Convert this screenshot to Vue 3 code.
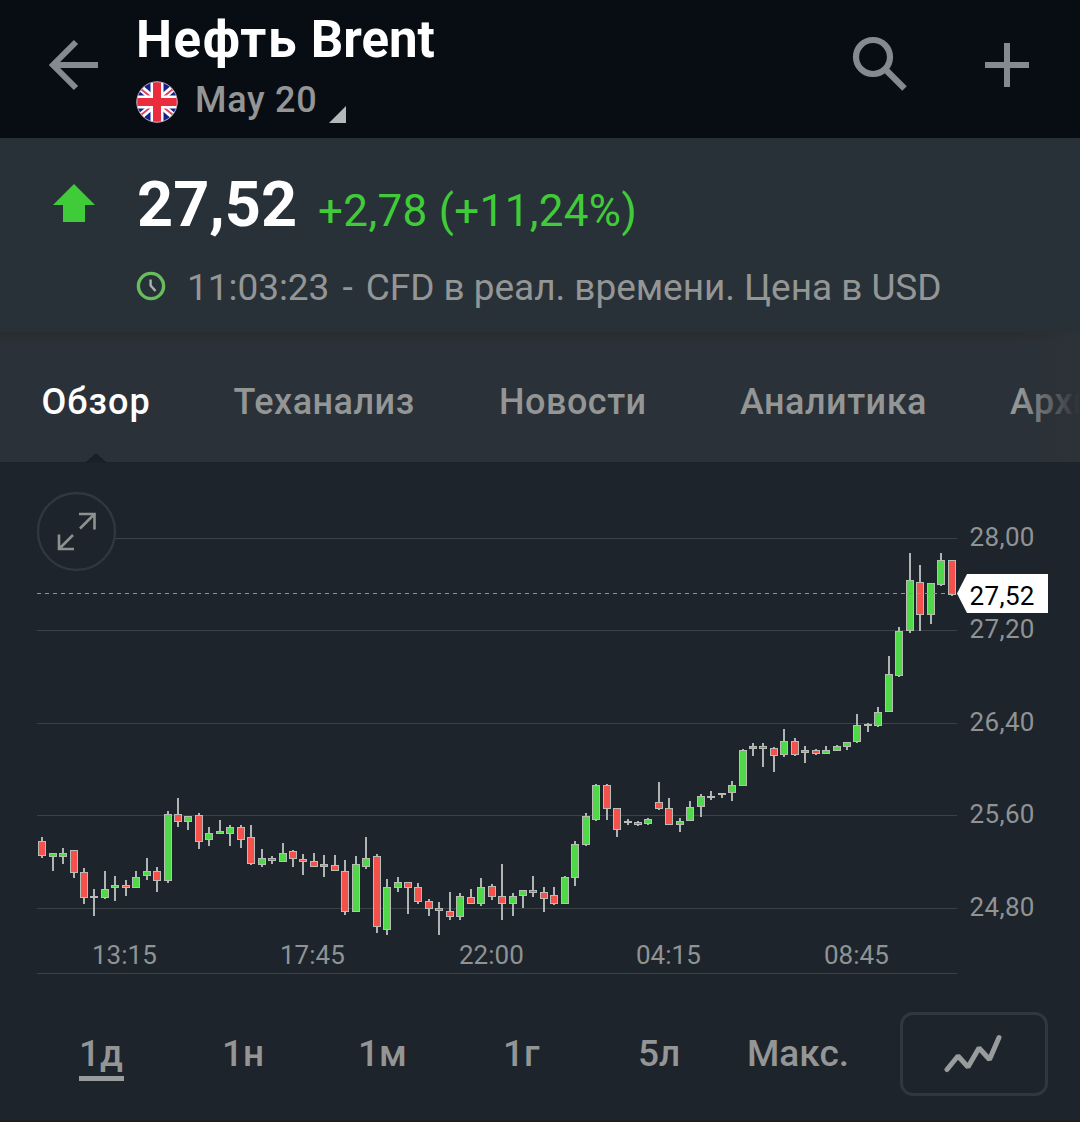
<script setup>
const tabs = ['Обзор', 'Теханализ', 'Новости', 'Аналитика', 'Архив']
const ranges = ['1д', '1н', '1м', '1г', '5л', 'Макс.']

const gridLines = [
  { y: 538.5, label: '28,00' },
  { y: 630.5, label: '27,20' },
  { y: 723.5, label: '26,40' },
  { y: 815.5, label: '25,60' },
  { y: 908.5, label: '24,80' },
]
const times = [
  { x: 92, label: '13:15' },
  { x: 280, label: '17:45' },
  { x: 459, label: '22:00' },
  { x: 636, label: '04:15' },
  { x: 824, label: '08:45' },
]

// high, body top, body bottom, low, direction (g: up, r: down, n: flat)
const raw = [
  [837, 841, 856, 858, 'r'], [853, 853, 857, 871, 'g'], [848, 853, 857, 864, 'g'], [850, 850, 873, 878, 'r'],
  [868, 872, 898, 904, 'r'], [889, 896, 898, 916, 'n'], [871, 889, 898, 899, 'g'], [876, 885, 888, 901, 'g'],
  [880, 885, 888, 896, 'r'], [871, 877, 888, 888, 'g'], [858, 871, 876, 880, 'g'], [867, 871, 881, 892, 'r'],
  [811, 814, 881, 883, 'g'], [798, 814, 822, 827, 'r'], [816, 816, 822, 830, 'g'], [813, 815, 842, 849, 'r'],
  [827, 833, 840, 846, 'g'], [820, 831, 834, 834, 'g'], [825, 827, 834, 846, 'g'], [825, 827, 840, 848, 'r'],
  [825, 837, 864, 865, 'r'], [849, 858, 865, 867, 'g'], [856, 858, 861, 864, 'r'], [843, 853, 862, 862, 'g'],
  [850, 851, 859, 867, 'r'], [854, 859, 862, 875, 'r'], [853, 861, 867, 867, 'r'], [855, 864, 867, 877, 'g'],
  [855, 865, 871, 871, 'r'], [860, 871, 912, 915, 'r'], [856, 864, 912, 912, 'g'], [837, 858, 867, 869, 'g'],
  [854, 856, 927, 933, 'r'], [879, 887, 930, 935, 'g'], [877, 882, 888, 892, 'g'], [882, 882, 888, 914, 'r'],
  [883, 887, 902, 904, 'r'], [899, 901, 909, 916, 'r'], [902, 908, 911, 935, 'r'], [892, 911, 917, 920, 'r'],
  [893, 896, 917, 920, 'g'], [889, 897, 904, 904, 'r'], [878, 887, 904, 906, 'g'], [884, 886, 897, 900, 'r'],
  [864, 896, 904, 920, 'r'], [893, 896, 904, 916, 'g'], [890, 890, 896, 908, 'g'], [876, 890, 893, 897, 'r'],
  [887, 892, 899, 912, 'r'], [887, 895, 904, 905, 'r'], [876, 877, 904, 904, 'g'], [841, 844, 878, 886, 'g'],
  [813, 816, 845, 846, 'g'], [784, 785, 820, 821, 'g'], [784, 785, 809, 820, 'r'], [808, 808, 830, 837, 'r'],
  [819, 821, 823, 825, 'n'], [821, 822, 825, 826, 'r'], [818, 819, 824, 825, 'g'], [782, 802, 809, 810, 'r'],
  [798, 808, 825, 825, 'r'], [818, 821, 825, 832, 'g'], [801, 807, 821, 821, 'g'], [794, 796, 807, 817, 'g'],
  [791, 796, 798, 800, 'n'], [793, 793, 795, 798, 'n'], [781, 785, 793, 801, 'g'], [749, 750, 786, 786, 'g'],
  [743, 746, 749, 756, 'g'], [743, 746, 749, 767, 'r'], [747, 748, 756, 772, 'r'], [729, 741, 755, 757, 'g'],
  [738, 741, 755, 756, 'r'], [746, 750, 753, 763, 'g'], [749, 750, 754, 755, 'r'], [746, 750, 754, 754, 'g'],
  [745, 746, 751, 751, 'g'], [742, 742, 747, 750, 'g'], [714, 725, 742, 743, 'g'], [723, 724, 726, 732, 'n'],
  [707, 712, 726, 727, 'g'], [656, 674, 712, 712, 'g'], [627, 631, 676, 677, 'g'], [553, 580, 631, 633, 'g'],
  [565, 582, 615, 631, 'r'], [583, 583, 615, 624, 'g'], [553, 560, 585, 586, 'g'], [560, 560, 595, 596, 'r'],
]
const colors = { g: '#4fd847', r: '#f4504c', n: '#b3b8b8' }
const candles = raw.map(([high, top, bottom, low, dir], i) => ({
  x: Math.round(38.15 + i * 10.453),
  high, top, bottom, low,
  fill: colors[dir],
}))
</script>

<template>
  <div class="screen">
    <header class="topbar">
      <svg class="back" width="52" height="52" viewBox="0 0 52 52" fill="none" stroke="#858991" stroke-width="6">
        <path d="M50 26H6M28 3L5 26L28 49" />
      </svg>
      <div class="heading">
        <h1><span>Нефть</span> Brent</h1>
        <div class="contract">
          <svg class="flag" width="42" height="42" viewBox="0 0 42 42">
            <defs><clipPath id="disc"><circle cx="21" cy="21" r="20.3" /></clipPath></defs>
            <g clip-path="url(#disc)">
              <rect width="42" height="42" fill="#14208c" />
              <path d="M0 3L42 39M0 39L42 3" stroke="#fff" stroke-width="6.5" />
              <path d="M0 4L42 38M0 38L42 4" stroke="#e0405a" stroke-width="1.8" />
              <path d="M21 0V42M0 21H42" stroke="#fff" stroke-width="13" />
              <path d="M21 0V42M0 21H42" stroke="#ea2c3c" stroke-width="8" />
            </g>
            <circle cx="21" cy="21" r="20.2" fill="none" stroke="#b9adba" stroke-width="1" />
          </svg>
          <span class="month">May 20</span>
          <svg class="corner" width="17" height="17" viewBox="0 0 17 17"><path d="M17 0V17H0Z" fill="#b4b8b8" /></svg>
        </div>
      </div>
      <svg class="search" width="58" height="58" viewBox="0 0 58 58" fill="none" stroke="#858991">
        <circle cx="22" cy="22" r="17" stroke-width="6.2" />
        <path d="M35.5 35.5L53.5 53.5" stroke-width="6.4" />
      </svg>
      <svg class="plus" width="44" height="44" viewBox="0 0 44 44" stroke="#858991" stroke-width="6">
        <path d="M22 0V44M0 22H44" />
      </svg>
    </header>

    <section class="quote">
      <svg class="up" width="42" height="38" viewBox="0 0 42 38"><path d="M21 0L42 21H32V38H10V21H0Z" fill="#40cc38" /></svg>
      <div class="figures">
        <div class="priceline">
          <strong>27,52</strong>
          <span class="change">+2,78 (+11,24%)</span>
        </div>
        <div class="status">
          <svg width="30" height="30" viewBox="0 0 30 30" fill="none">
            <circle cx="15" cy="15" r="12.6" stroke="#68bd5c" stroke-width="3.4" />
            <path d="M14.6 8.5V14.5L19.5 20" stroke="#a9b4ac" stroke-width="2.4" />
          </svg>
          <span>11:03:23 <i>-</i> CFD в реал. времени. Цена в USD</span>
        </div>
      </div>
    </section>

    <nav class="tabs">
      <span v-for="(tab, i) in tabs" :key="tab" :class="{ active: i === 0 }">{{ tab }}</span>
    </nav>

    <main class="chart">
      <svg width="1080" height="530" viewBox="0 462 1080 530">
        <g stroke="#3a4247" stroke-width="1">
          <path v-for="line in gridLines" :key="line.y" :d="`M37 ${line.y}H957`" />
          <path d="M37 973.5H957" />
        </g>
        <g class="axis price">
          <text v-for="line in gridLines" :key="line.label" x="969.5" :y="line.y + 7.5">{{ line.label }}</text>
        </g>
        <g class="axis">
          <text v-for="t in times" :key="t.label" :x="t.x" y="964">{{ t.label }}</text>
        </g>

        <g v-for="(c, i) in candles" :key="i">
          <rect :x="c.x + 3" :y="c.high" width="2" :height="c.low - c.high" fill="#aeb3b4" />
          <rect :x="c.x + 0.5" :y="c.top + 0.5" width="7" :height="Math.max(1, c.bottom - c.top - 1)" :fill="c.fill" stroke="#b9bdb6" stroke-width="1" />
        </g>

        <path d="M37 593.5H957" stroke="#8c9491" stroke-width="1.2" stroke-dasharray="4 4" />
        <path d="M957 593.5L967 574H1048V613H967Z" fill="#fff" />
        <text class="current" x="969.5" y="605">27,52</text>

        <circle cx="76.5" cy="531.5" r="38.5" fill="#1e242b" stroke="#30373f" stroke-width="2.4" />
        <path d="M79 514H94.5V529.5M94 514.5L80 528.5M59 534.5V549H74M59.5 548.5L73 535" fill="none" stroke="#8d9190" stroke-width="2.6" />
        <path d="M85 463L96 453L107 463Z" fill="#1a2028" />
      </svg>
    </main>

    <footer class="ranges">
      <div class="periods">
        <span v-for="(r, i) in ranges" :key="r"><b :class="{ selected: i === 0 }">{{ r }}</b></span>
      </div>
      <div class="mode">
        <svg width="60" height="42" viewBox="0 0 60 42" fill="none" stroke="#999c9c" stroke-width="5" stroke-linecap="round" stroke-linejoin="bevel">
          <path d="M3 36.5L14 23L24 34L35 15L45.5 26.5L55 4.5" />
        </svg>
      </div>
    </footer>
  </div>
</template>

<style>
body {
  margin: 0;
  background: #1e242b;
}
</style>

<style scoped>
.screen {
  width: 1080px;
  height: 1122px;
  box-sizing: border-box;
  display: flex;
  flex-direction: column;
  overflow: hidden;
  background: #1e242b;
  border-bottom: 2px solid #1b1f22;
  color: #949696;
  font-family: Roboto, "Liberation Sans", sans-serif;
  white-space: nowrap;
}
.topbar {
  display: flex;
  flex: none;
  height: 138px;
  box-sizing: border-box;
  padding-left: 48px;
  background: #080d14;
}
.topbar > svg {
  flex: none;
}
.back {
  margin-top: 39px;
}
.heading {
  width: 715px;
  margin-left: 36px;
  padding-top: 12px;
}
h1 {
  margin: 0;
  color: #fff;
  font-size: 51px;
  font-weight: 700;
  line-height: 56px;
}
h1 span {
  letter-spacing: 1.6px;
}
.contract {
  display: flex;
  height: 42px;
  margin-top: 13px;
}
.month {
  margin: -1px 0 0 17px;
  width: 134px;
  font-size: 36px;
  font-weight: 500;
  line-height: 40px;
  letter-spacing: 0.7px;
}
.corner {
  margin-top: 25px;
}
.search {
  margin-top: 35px;
}
.plus {
  margin: 43px 0 0 76px;
}
.quote {
  display: flex;
  flex: none;
  height: 194px;
  background: #293138;
}
.up {
  flex: none;
  margin: 46px 0 0 53px;
}
.figures {
  margin-left: 41px;
  padding-top: 29px;
}
.priceline {
  display: flex;
  align-items: baseline;
  height: 99px;
  padding-left: 1px;
  line-height: 76px;
}
strong {
  width: 181px;
  color: #fff;
  font-size: 63px;
  font-weight: 700;
}
.change {
  color: #40cc38;
  font-size: 44px;
  letter-spacing: 0.35px;
}
.status {
  display: flex;
  gap: 21px;
  font-size: 37px;
  line-height: 44px;
  letter-spacing: -0.05px;
}
.status i {
  margin: 0 4px;
  font-style: normal;
}
.status svg {
  margin-top: 5px;
}
.tabs {
  position: relative;
  display: grid;
  flex: none;
  grid-template-columns: 192px 265.5px 241px 270px auto;
  height: 130px;
  box-sizing: border-box;
  padding: 48px 0 0 41.5px;
  background: linear-gradient(#282d31, #2b3138 12px);
  font-size: 36px;
  font-weight: 500;
  line-height: 44px;
  letter-spacing: 0.5px;
}
.tabs .active {
  color: #fff;
  letter-spacing: 1px;
}
.tabs::after {
  content: "";
  position: absolute;
  inset: 0 0 0 auto;
  width: 60px;
  background: linear-gradient(90deg, #2b313800, #2d3138);
}
.chart {
  position: relative;
  z-index: 1;
  flex: none;
  height: 530px;
}
.chart svg {
  display: block;
  overflow: visible;
}
.axis text {
  fill: #8f9394;
  font-size: 26px;
}
.price text,
.current {
  letter-spacing: 0.35px;
}
.current {
  fill: #000;
  font-size: 26px;
}
.ranges {
  display: flex;
  padding-top: 20px;
}
.periods {
  display: grid;
  grid-template-columns: 143px 136px 145px 135px 109px 153px;
  padding: 20px 0 0 79px;
  font-size: 37px;
  line-height: 44px;
}
b {
  display: inline-block;
  font-weight: 500;
}
.selected {
  padding-right: 1px;
  box-shadow: 0 5px 0 #999c9c;
}
.mode {
  display: flex;
  align-items: center;
  justify-content: center;
  width: 148px;
  height: 84px;
  box-sizing: border-box;
  border: 3px solid #30373f;
  border-radius: 13px;
}
</style>
